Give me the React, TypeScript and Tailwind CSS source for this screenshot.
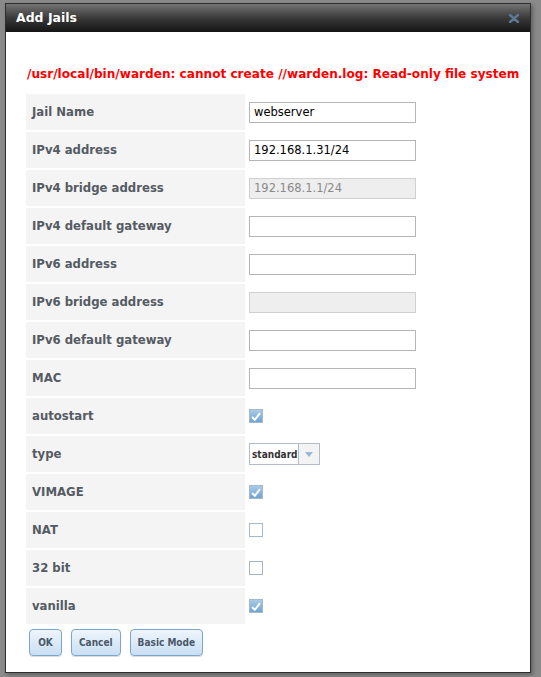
import React from "react";

type Field =
  | { label: string; kind: "text"; value?: string; disabled?: boolean }
  | { label: string; kind: "check"; checked: boolean }
  | { label: string; kind: "select"; value: string };

const fields: Field[] = [
  { label: "Jail Name", kind: "text", value: "webserver" },
  { label: "IPv4 address", kind: "text", value: "192.168.1.31/24" },
  { label: "IPv4 bridge address", kind: "text", value: "192.168.1.1/24", disabled: true },
  { label: "IPv4 default gateway", kind: "text" },
  { label: "IPv6 address", kind: "text" },
  { label: "IPv6 bridge address", kind: "text", disabled: true },
  { label: "IPv6 default gateway", kind: "text" },
  { label: "MAC", kind: "text" },
  { label: "autostart", kind: "check", checked: true },
  { label: "type", kind: "select", value: "standard" },
  { label: "VIMAGE", kind: "check", checked: true },
  { label: "NAT", kind: "check", checked: false },
  { label: "32 bit", kind: "check", checked: false },
  { label: "vanilla", kind: "check", checked: true },
];

const verdana = { fontFamily: '"DejaVu Sans", Verdana, sans-serif' };
const tahoma = { fontFamily: '"DejaVu Sans Condensed", Tahoma, sans-serif' };

function Check({ checked }: { checked: boolean }) {
  return (
    <span
      className={
        "flex h-[14px] w-[14px] items-center justify-center border border-[#a9b7c6] " +
        (checked ? "bg-gradient-to-b from-[#a8cbe9] to-[#6fa3d3]" : "bg-white")
      }
    >
      {checked && (
        <svg width="10" height="9" viewBox="0 0 10 9">
          <path d="M1 5 L3.8 7.8 L9 1.2" fill="none" stroke="#fff" strokeWidth="2" />
        </svg>
      )}
    </span>
  );
}

function Control({ f }: { f: Field }) {
  if (f.kind === "check") return <Check checked={f.checked} />;
  if (f.kind === "select")
    return (
      <div className="flex h-[22px] w-[71px] border border-[#b3bccb] bg-white">
        <span
          className="flex flex-1 items-center pl-[2px] text-[10px] font-bold text-[#333]"
          style={tahoma}
        >
          {f.value}
        </span>
        <span className="flex w-[22px] items-center justify-center border-l border-[#b3bccb] bg-[#f3f3f3]">
          <svg width="8" height="5" viewBox="0 0 8 5">
            <path d="M0 0 H8 L4 5 Z" fill="#9bb6d6" />
          </svg>
        </span>
      </div>
    );
  return (
    <div
      className={
        "flex h-[21px] w-[167px] items-center border px-[4px] text-[11.5px] " +
        (f.disabled
          ? "border-[#d0d0d0] bg-[#eeeeee] text-[#8a8a8a]"
          : "border-[#b5b5b5] bg-white text-black")
      }
    >
      {f.value}
    </div>
  );
}

function Button({ children }: { children: React.ReactNode }) {
  return (
    <button
      className="h-[27px] min-w-[33px] rounded-[4px] border border-[#7ea5cc] bg-gradient-to-b from-[#eef5fc] to-[#c9dff3] px-[7px] text-[10px] font-bold text-[#4a5868] shadow-[0_1px_1px_rgba(0,0,0,0.15)]"
      style={tahoma}
    >
      {children}
    </button>
  );
}

export default function App() {
  return (
    <div className="h-[677px] w-[541px] bg-[#8a8a8a] pl-[5px] pt-[3px]" style={verdana}>
      <div className="flex h-[670px] w-[526px] flex-col border border-[#2e2e2e] bg-white shadow-[2px_2px_4px_rgba(0,0,0,0.3)]">
        <div className="flex h-[28px] items-center justify-between bg-gradient-to-b from-[#747474] via-[#3a3a3a] to-[#151515] pl-[10px] pr-[11px]">
          <span className="text-[12.5px] font-bold text-white">Add Jails</span>
          <svg width="10" height="9" viewBox="0 0 10 9">
            <path d="M1 1 L9 8 M9 1 L1 8" stroke="#5f7896" strokeWidth="2.4" strokeLinecap="round" />
          </svg>
        </div>
        <div className="flex flex-col pl-[20px]">
          <div className="mt-[33px] pl-[1px] text-[12.1px] font-bold text-[#ff0000]">
            /usr/local/bin/warden: cannot create //warden.log: Read-only file system
          </div>
          <div className="mt-[11px] flex flex-col gap-[2px]">
            {fields.map((f) => (
              <div key={f.label} className="flex h-[36px] items-center">
                <div className="flex h-full w-[219px] items-center bg-[#f4f4f4] pl-[6px] pt-[2px] text-[11.7px] font-bold text-[#555b63]">
                  {f.label}
                </div>
                <div className="pl-[4px]">
                  <Control f={f} />
                </div>
              </div>
            ))}
          </div>
          <div className="mt-[5px] flex gap-[9px] pl-[3px]">
            <Button>OK</Button>
            <Button>Cancel</Button>
            <Button>Basic Mode</Button>
          </div>
        </div>
      </div>
    </div>
  );
}
